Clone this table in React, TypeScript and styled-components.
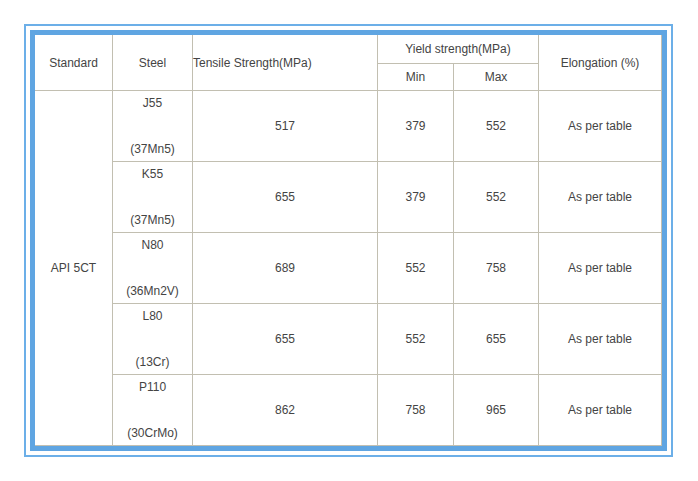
import React from 'react';
import styled, {createGlobalStyle} from 'styled-components';

const GlobalStyle = createGlobalStyle`
  html, body {
    margin: 0;
    padding: 0;
    background: #ffffff;
  }

  body {
    font-family: "Liberation Sans", Arial, sans-serif;
    font-size: 12px;
    color: #444;
  }
`;

const Page = styled.div`
  padding: 24px;
  width: 698px;
  box-sizing: border-box;
`;

const OuterFrame = styled.div`
  width: 649px;
  box-sizing: border-box;
  border: 2px solid #6cafe8;
  padding: 4px;
  background: #fff;
`;

const InnerFrame = styled.div`
  border: 5px solid #5fa5e2;
  background: #fff;
`;

const Grid = styled.div`
  display: grid;
  grid-template-columns: 78px 80px 185px 76px 85px 123px;
  grid-template-rows: 29px 27px repeat(5, 71px);
`;

type CellProps = {
  $col?: string;
  $row?: string;
  $align?: 'center' | 'left';
};

const Cell = styled.div<CellProps>`
  box-sizing: border-box;
  border-right: 1px solid #c2bfb1;
  border-bottom: 1px solid #c2bfb1;
  display: flex;
  align-items: center;
  justify-content: ${p => (p.$align === 'left' ? 'flex-start' : 'center')};
  text-align: center;
  line-height: 14px;
  white-space: nowrap;
  grid-column: ${p => p.$col || 'auto'};
  grid-row: ${p => p.$row || 'auto'};
`;

const SteelCell = styled(Cell)`
  flex-direction: column;
  justify-content: space-between;
  padding: 5px 0;
`;

type Row = {
  grade: string;
  chem: string;
  tensile: string;
  min: string;
  max: string;
};

const rows: Row[] = [
  {grade: 'J55', chem: '(37Mn5)', tensile: '517', min: '379', max: '552'},
  {grade: 'K55', chem: '(37Mn5)', tensile: '655', min: '379', max: '552'},
  {grade: 'N80', chem: '(36Mn2V)', tensile: '689', min: '552', max: '758'},
  {grade: 'L80', chem: '(13Cr)', tensile: '655', min: '552', max: '655'},
  {grade: 'P110', chem: '(30CrMo)', tensile: '862', min: '758', max: '965'},
];

function App() {
  return (
    <Page>
      <GlobalStyle/>
      <OuterFrame>
        <InnerFrame>
          <Grid>
            <Cell $col="1" $row="1 / span 2">Standard</Cell>
            <Cell $col="2" $row="1 / span 2">Steel</Cell>
            <Cell $col="3" $row="1 / span 2" $align="left">Tensile Strength(MPa)</Cell>
            <Cell $col="4 / span 2" $row="1">Yield strength(MPa)</Cell>
            <Cell $col="6" $row="1 / span 2">Elongation (%)</Cell>
            <Cell $col="4" $row="2">Min</Cell>
            <Cell $col="5" $row="2">Max</Cell>

            <Cell $col="1" $row="3 / span 5">API 5CT</Cell>
            {rows.map((r, i) => (
              <React.Fragment key={r.grade}>
                <SteelCell $col="2" $row={String(i + 3)}>
                  <span>{r.grade}</span>
                  <span>{r.chem}</span>
                </SteelCell>
                <Cell $col="3" $row={String(i + 3)}>{r.tensile}</Cell>
                <Cell $col="4" $row={String(i + 3)}>{r.min}</Cell>
                <Cell $col="5" $row={String(i + 3)}>{r.max}</Cell>
                <Cell $col="6" $row={String(i + 3)}>As per table</Cell>
              </React.Fragment>
            ))}
          </Grid>
        </InnerFrame>
      </OuterFrame>
    </Page>
  );
}

export default App;
